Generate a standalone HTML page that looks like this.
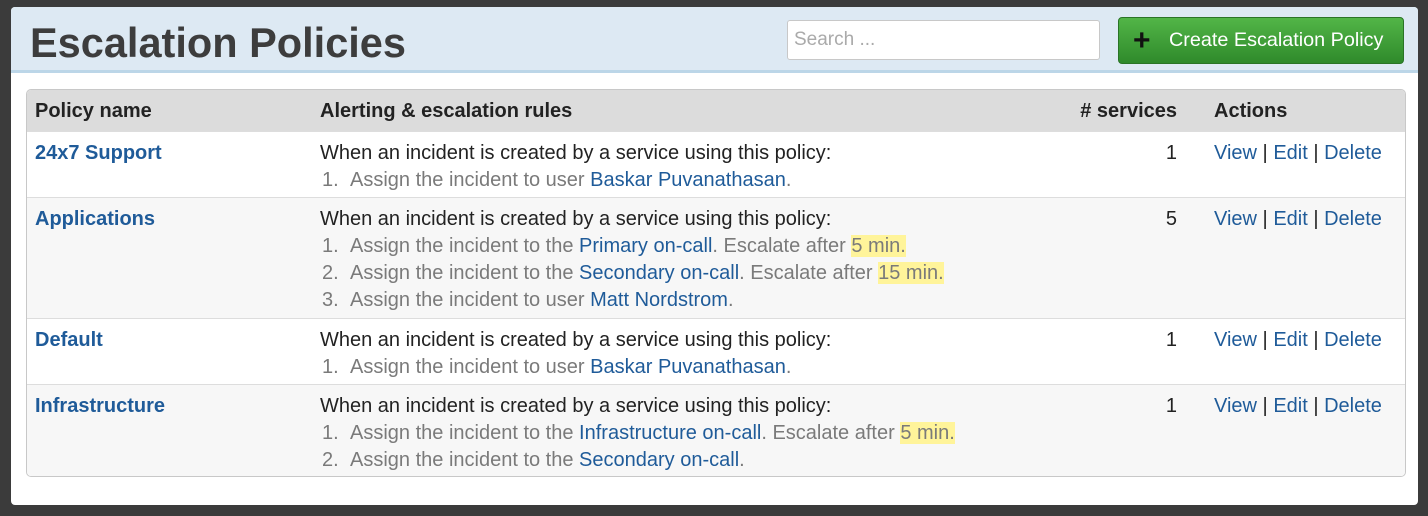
<!DOCTYPE html>
<html><head><style>
body{margin:0;width:1428px;height:516px;background:#3b3b3b;font-family:"Liberation Sans",sans-serif;overflow:hidden;position:relative}
.panel{position:absolute;left:11px;top:7px;width:1407px;height:498px;background:#fff;border-radius:4px;overflow:hidden}
.hdr{height:63px;background:#dde9f3;border-bottom:3px solid #bcd6e8;position:relative}
h1{margin:0;position:absolute;left:19px;top:12px;font-size:41.5px;color:#3d3d3d;font-weight:bold}
.search{position:absolute;left:776px;top:13px;background:#fff;border:1px solid #c8c8c8;border-radius:3px;color:#aaa;font-size:19px;line-height:38px;padding-left:6px;box-sizing:border-box;width:313px;height:40px}
.btn{position:absolute;left:1107px;top:10px;width:286px;height:47px;border-radius:4px;background:linear-gradient(#52b547,#2f8a2b);border:1px solid #2a7426;box-sizing:border-box;color:#fff;font-size:19.8px;line-height:45px}
.btn b{position:absolute;left:14px;top:0;color:#111;font-size:30px;font-weight:900}
.btn span{position:absolute;left:50px}
.tbl{position:absolute;left:15px;top:82px;width:1380px;height:388px;border:1px solid #c8c8c8;border-radius:5px;overflow:hidden;box-sizing:border-box}
.row{position:absolute;left:0;width:100%;border-top:1px solid #ddd;font-size:20px}
.th{top:0;height:42px;background:#dcdcdc;border:none;font-weight:bold;color:#222}
.c{position:absolute}
a{color:#1f5b99;text-decoration:none}
.n{left:8px;font-weight:bold;color:#1f5b99}
.r{left:293px;color:#222}
.s{right:228px;text-align:right;color:#222}
.a{left:1187px;color:#222}
.li{color:#7a7a7a;height:27px;line-height:27px}
.li i{font-style:normal;display:inline-block;width:28px;padding-left:2px}
.hl{background:#fff49a}
.line{height:28px;line-height:28px}
</style></head><body>
<div class="panel">
<div class="hdr"><h1>Escalation Policies</h1><div class="search">Search ...</div><div class="btn"><b>+</b><span>Create Escalation Policy</span></div></div>
<div class="tbl">
<div class="row th"><div class="c n" style="color:#222;top:10px">Policy name</div><div class="c r" style="top:10px">Alerting &amp; escalation rules</div><div class="c s" style="top:10px">#&nbsp;services</div><div class="c a" style="top:10px">Actions</div></div>
<div class="row" style="top:41px;height:66px;background:#fff"><div class="c n line" style="top:7px">24x7 Support</div><div class="c r" style="top:7px"><div class="line">When an incident is created by a service using this policy:</div><div class="li"><i>1.</i>Assign the incident to user <a>Baskar Puvanathasan</a>.</div></div><div class="c s line" style="top:7px">1</div><div class="c a line" style="top:7px"><a>View</a> | <a>Edit</a> | <a>Delete</a></div></div>
<div class="row" style="top:107px;height:121px;background:#f7f7f7"><div class="c n line" style="top:7px">Applications</div><div class="c r" style="top:7px"><div class="line">When an incident is created by a service using this policy:</div><div class="li"><i>1.</i>Assign the incident to the <a>Primary on-call</a>. Escalate after <span class="hl">5 min.</span></div><div class="li"><i>2.</i>Assign the incident to the <a>Secondary on-call</a>. Escalate after <span class="hl">15 min.</span></div><div class="li"><i>3.</i>Assign the incident to user <a>Matt Nordstrom</a>.</div></div><div class="c s line" style="top:7px">5</div><div class="c a line" style="top:7px"><a>View</a> | <a>Edit</a> | <a>Delete</a></div></div>
<div class="row" style="top:228px;height:66px;background:#fff"><div class="c n line" style="top:7px">Default</div><div class="c r" style="top:7px"><div class="line">When an incident is created by a service using this policy:</div><div class="li"><i>1.</i>Assign the incident to user <a>Baskar Puvanathasan</a>.</div></div><div class="c s line" style="top:7px">1</div><div class="c a line" style="top:7px"><a>View</a> | <a>Edit</a> | <a>Delete</a></div></div>
<div class="row" style="top:294px;height:94px;background:#f7f7f7"><div class="c n line" style="top:7px">Infrastructure</div><div class="c r" style="top:7px"><div class="line">When an incident is created by a service using this policy:</div><div class="li"><i>1.</i>Assign the incident to the <a>Infrastructure on-call</a>. Escalate after <span class="hl">5 min.</span></div><div class="li"><i>2.</i>Assign the incident to the <a>Secondary on-call</a>.</div></div><div class="c s line" style="top:7px">1</div><div class="c a line" style="top:7px"><a>View</a> | <a>Edit</a> | <a>Delete</a></div></div>
</div>
</div>
</body></html>
